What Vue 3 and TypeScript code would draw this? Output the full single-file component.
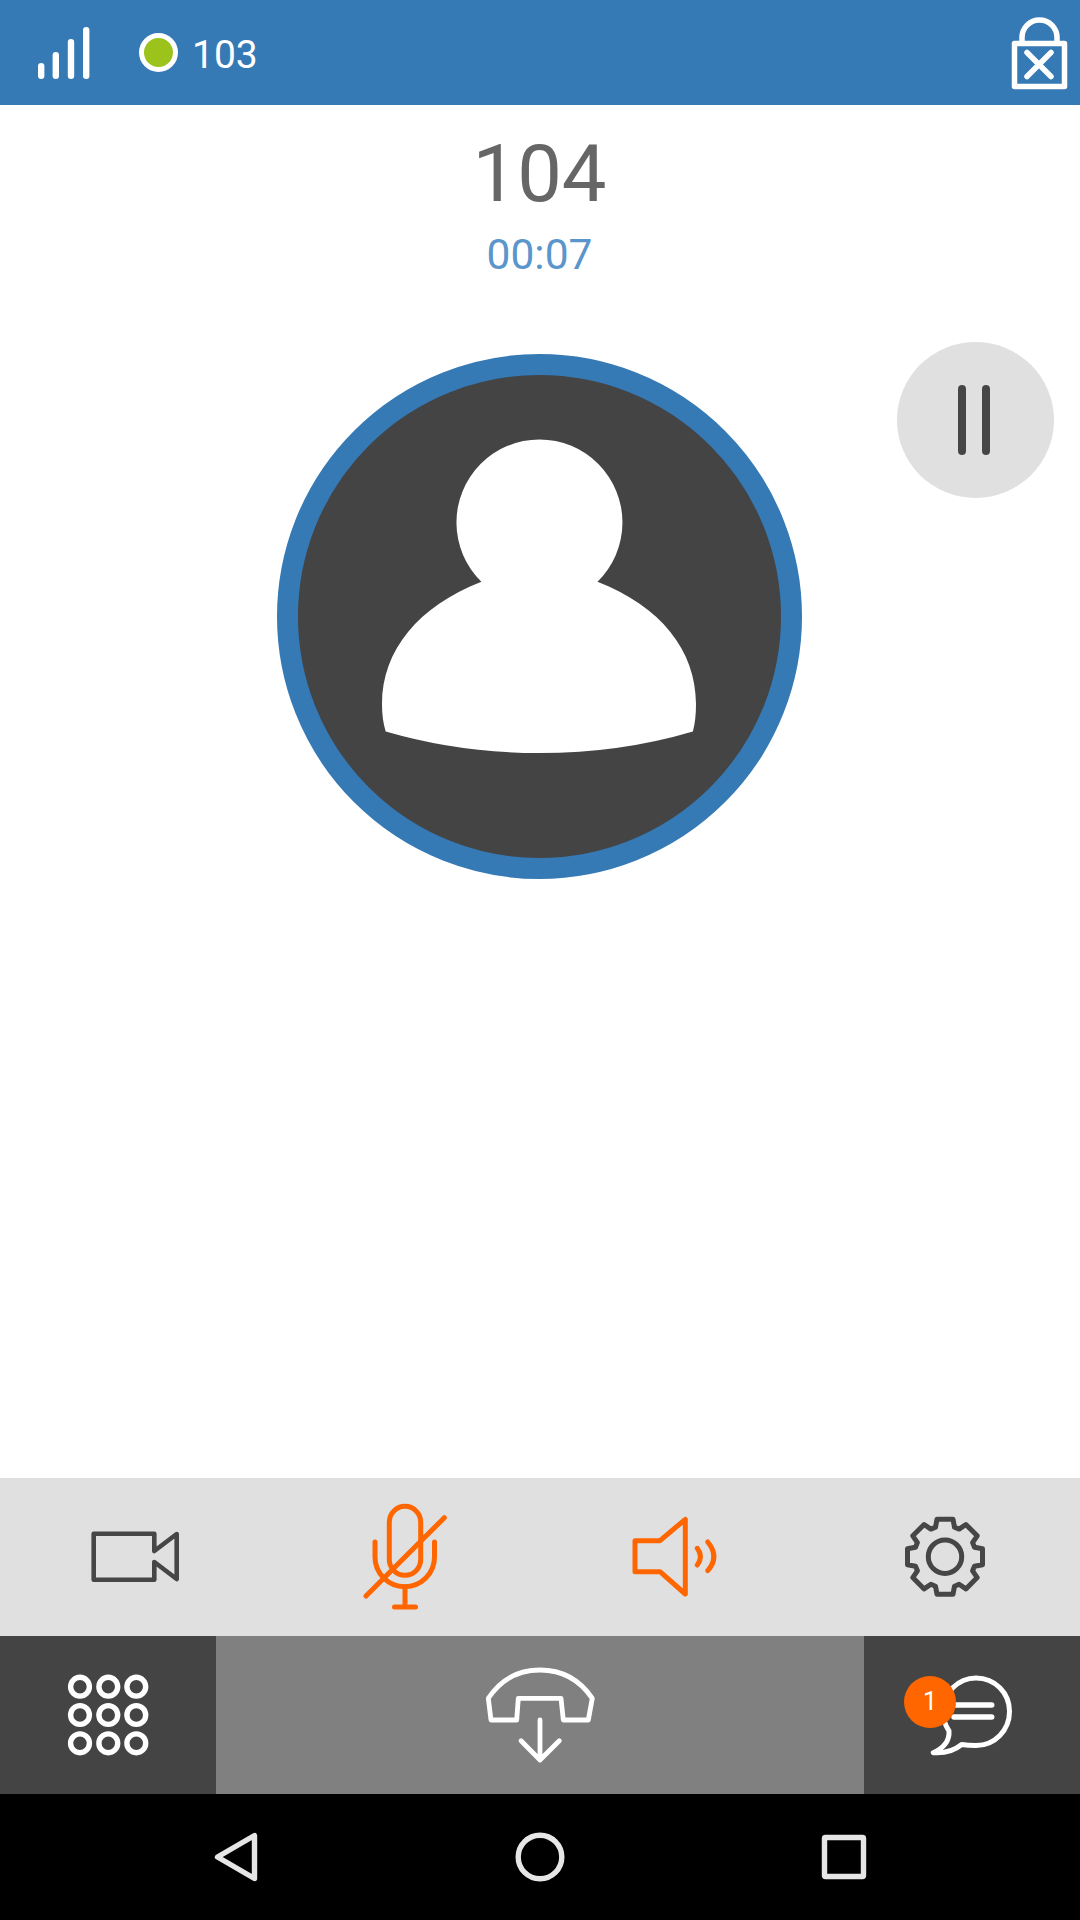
<script setup lang="ts">
const dialDots: { x: number; y: number }[] = []
for (const y of [1686.7, 1715, 1743.3]) {
  for (const x of [80, 108.3, 136.3]) dialDots.push({ x, y })
}

function gearPath(cx: number, cy: number): string {
  const local = [
    [-9.5, 29.5],
    [-8, 37.5],
    [8, 37.5],
    [9.5, 29.5],
  ]
  const pts: string[] = []
  for (let i = 0; i < 8; i++) {
    const a = (i * Math.PI) / 4
    for (const [x, y] of local) {
      const px = cx + x * Math.cos(a) + y * Math.sin(a)
      const py = cy + x * Math.sin(a) - y * Math.cos(a)
      pts.push(`${px.toFixed(1)} ${py.toFixed(1)}`)
    }
  }
  return `M${pts.join('L')}Z`
}
const gear = gearPath(945, 1556.7)
</script>

<template>
  <div class="screen">
    <header class="topbar">
      <svg class="signal" viewBox="38 26 52 52" width="52" height="52">
        <g fill="#fff">
          <rect x="38" y="62" width="6.4" height="16" rx="3.2" />
          <rect x="52.6" y="51" width="6.4" height="27" rx="3.2" />
          <rect x="67.8" y="38" width="6.4" height="40" rx="3.2" />
          <rect x="83" y="26" width="6.4" height="52" rx="3.2" />
        </g>
      </svg>
      <span class="presence"></span>
      <span class="extension">103</span>
      <svg class="lock" viewBox="1010 14 60 76" width="60" height="76">
        <g fill="none" stroke="#fff" stroke-width="5.5" stroke-linecap="round" stroke-linejoin="round">
          <rect x="1014.5" y="42.5" width="50" height="43" />
          <path d="M1022 42V36.500a17.500 17.500 0 0 1 35 0V42" />
          <path d="M1027 51.500L1051 75.500M1051 51.500L1027 75.500" />
        </g>
      </svg>
    </header>

    <main class="call">
      <div class="peer">104</div>
      <div class="timer">00:07</div>
      <svg class="avatar" viewBox="277 354 525 525" width="525" height="525">
        <circle cx="539.500" cy="616.500" r="252" fill="#444444" stroke="#3579b5" stroke-width="21" />
        <path
          fill="#fff"
          d="M481.400 581.800A83 83 0 1 1 597.500 581.800C660 606 696 650 696 704Q696 720 692.900 731.400Q620 753 539.500 753Q460 753 385.700 731.400Q382 720 382 704C382 650 419 606 481.400 581.800Z"
        />
      </svg>
      <button class="pause" type="button" aria-label="Hold">
        <span></span>
        <span></span>
      </button>
    </main>

    <section class="controls">
      <div class="cell">
        <svg viewBox="85 1507 100 100" width="100" height="100">
          <path class="ic dark" stroke-width="4.600" d="M154.300 1551V1533.700H93.700V1579.700H154.300V1562L176.700 1579V1534Z" />
        </svg>
      </div>
      <div class="cell">
        <svg viewBox="355 1497 100 120" width="100" height="120">
          <g class="ic orange" stroke-width="5">
            <rect x="389.300" y="1506.300" width="31.400" height="69" rx="15.700" />
            <path d="M375 1542V1557A29.750 29.750 0 0 0 434.500 1557V1542" />
            <path d="M405 1587V1607M394.500 1607H415.500" />
            <path d="M444.300 1517.700L366 1596" />
          </g>
        </svg>
      </div>
      <div class="cell">
        <svg viewBox="625 1507 100 100" width="100" height="100">
          <g class="ic orange" stroke-width="5">
            <path d="M635 1540.700H660L685.300 1519.300V1594L660 1571.700H635Z" />
            <path d="M697.300 1548.300Q703.500 1556.700 697.300 1565" />
            <path d="M707.700 1542Q720 1556.700 707.700 1570.700" />
          </g>
        </svg>
      </div>
      <div class="cell">
        <svg viewBox="895 1507 100 100" width="100" height="100">
          <g class="ic dark" stroke-width="5">
            <path :d="gear" />
            <circle cx="945" cy="1556.700" r="16.700" />
          </g>
        </svg>
      </div>
    </section>

    <section class="actions">
      <div class="action side">
        <svg viewBox="58 1665 100 100" width="100" height="100">
          <circle v-for="(d, i) in dialDots" :key="i" :cx="d.x" :cy="d.y" r="9.400" fill="none" stroke="#fff" stroke-width="5.400" />
        </svg>
      </div>
      <div class="action hangup">
        <svg viewBox="480 1660 120 110" width="120" height="110">
          <g class="ic white" stroke-width="4.800">
            <path d="M488.300 1698.300Q507 1670 540 1670Q573 1670 592.300 1698.300L588.300 1720H563.300L561 1698.300H518.300L516.700 1720H491Z" />
            <path d="M540 1720V1760M521 1740.700L540 1760L559.300 1740.700" />
          </g>
        </svg>
      </div>
      <div class="action side chat">
        <svg viewBox="922 1665 100 100" width="100" height="100">
          <g class="ic white" stroke-width="5">
            <path d="M961.700 1744.500Q968 1745.500 976 1745.500C995 1745.500 1009.500 1730 1009.500 1711.500C1009.500 1693 995 1678 976 1678C958 1678 943 1693 943 1711.500C943 1719 945 1725 949 1731Q950 1745 933.300 1752.700Q950 1754 961.700 1744.500Z" />
            <path d="M954 1705H991.700M954 1717H991.700" stroke-width="5.500" />
          </g>
        </svg>
        <span class="badge">1</span>
      </div>
    </section>

    <nav class="sysnav">
      <svg viewBox="210 1830 50 54" width="50" height="54">
        <path class="ic nav" stroke-width="5.400" d="M217.500 1857L254.500 1835.500V1878.500Z" />
      </svg>
      <svg viewBox="512 1830 56 54" width="56" height="54">
        <circle class="ic nav" stroke-width="5.400" cx="540" cy="1857" r="21.800" />
      </svg>
      <svg viewBox="820 1830 50 54" width="50" height="54">
        <rect class="ic nav" stroke-width="5.400" x="824.500" y="1837.500" width="39" height="39" rx="1" />
      </svg>
    </nav>
  </div>
</template>

<style>
html,
body {
  margin: 0;
  background: #fff;
}
</style>

<style scoped>
.screen {
  width: 1080px;
  height: 1920px;
  display: flex;
  flex-direction: column;
  overflow: hidden;
  background: #fff;
  font-family: Roboto, "Liberation Sans", sans-serif;
}
svg {
  display: block;
  flex: none;
}
.ic {
  fill: none;
  stroke-linecap: round;
  stroke-linejoin: round;
}
.ic.dark {
  stroke: #464646;
}
.ic.orange {
  stroke: #ff6600;
}
.ic.white {
  stroke: #fff;
}
.ic.nav {
  stroke: #e6e6e6;
}
.topbar {
  height: 105px;
  flex: none;
  display: flex;
  align-items: center;
  padding: 0 10px 0 38px;
  box-sizing: border-box;
  background: #3579b5;
  color: #fff;
}
.presence {
  width: 29px;
  height: 29px;
  margin-left: 49px;
  border: 5.500px solid #fff;
  border-radius: 50%;
  background: #9bc31c;
}
.extension {
  margin-left: 14px;
  margin-top: 4px;
  font-size: 39px;
  line-height: 44px;
}
.lock {
  margin-left: auto;
}
.call {
  flex: 1;
  position: relative;
  display: flex;
  flex-direction: column;
  align-items: center;
}
.peer {
  margin-top: 22px;
  margin-left: -1px;
  font-size: 79.500px;
  line-height: 94px;
  color: #666;
}
.timer {
  margin-top: 9px;
  margin-left: -1px;
  font-size: 42.500px;
  line-height: 50px;
  color: #5a96cb;
}
.avatar {
  margin-top: 74px;
  margin-left: -1px;
}
.pause {
  position: absolute;
  left: 897px;
  top: 237px;
  width: 157px;
  height: 156px;
  padding: 0 3px 0 0;
  border: 0;
  border-radius: 50%;
  background: #e0e0e0;
  display: flex;
  justify-content: center;
  align-items: center;
  gap: 16px;
}
.pause span {
  width: 8px;
  height: 70px;
  border-radius: 4px;
  background: #464646;
}
.controls {
  height: 158px;
  flex: none;
  display: grid;
  grid-template-columns: repeat(4, 1fr);
  background: #e0e0e0;
}
.cell {
  display: flex;
  justify-content: center;
  align-items: center;
}
.actions {
  height: 158px;
  flex: none;
  display: grid;
  grid-template-columns: 216px 1fr 216px;
}
.action {
  display: flex;
  justify-content: center;
  align-items: center;
}
.side {
  background: #444444;
}
.hangup {
  background: #808080;
}
.chat {
  position: relative;
}
.badge {
  position: absolute;
  left: 40px;
  top: 40px;
  width: 52px;
  height: 52px;
  border-radius: 50%;
  background: #ff6600;
  color: #fff;
  font-size: 25px;
  line-height: 52px;
  text-align: center;
}
.sysnav {
  height: 126px;
  flex: none;
  background: #000;
  display: flex;
  align-items: center;
  justify-content: space-between;
  padding: 0 210px;
}
</style>
